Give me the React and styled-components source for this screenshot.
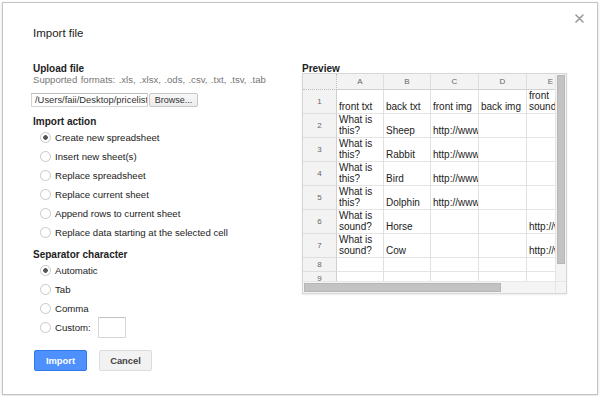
import React from "react";
import styled, { createGlobalStyle } from "styled-components";

const GlobalStyle = createGlobalStyle`
  html, body {
    margin: 0;
    padding: 0;
    background: #fff;
  }
  body {
    font-family: "Liberation Sans", Arial, sans-serif;
    color: #222;
  }
`;

const importActions = [
  "Create new spreadsheet",
  "Insert new sheet(s)",
  "Replace spreadsheet",
  "Replace current sheet",
  "Append rows to current sheet",
  "Replace data starting at the selected cell",
];

const separators = ["Automatic", "Tab", "Comma"];

const columns = ["A", "B", "C", "D", "E"];
const colWidths = [34, 47, 47, 48, 48, 48];

const rows = [
  { h: 24, cells: ["front txt", "back txt", "front img", "back img", "front sound"] },
  { h: 24, cells: ["What is this?", "Sheep", "http://www.example.com/sheep.jpg", "", ""] },
  { h: 24, cells: ["What is this?", "Rabbit", "http://www.example.com/rabbit.jpg", "", ""] },
  { h: 24, cells: ["What is this?", "Bird", "http://www.example.com/bird.jpg", "", ""] },
  { h: 24, cells: ["What is this?", "Dolphin", "http://www.example.com/dolphin.jpg", "", ""] },
  { h: 24, cells: ["What is sound?", "Horse", "", "", "http://www.example.com/horse.mp3"] },
  { h: 24, cells: ["What is sound?", "Cow", "", "", "http://www.example.com/cow.mp3"] },
  { h: 14, cells: ["", "", "", "", ""] },
  { h: 14, cells: ["", "", "", "", ""] },
];

function Radio({ label, checked, children }) {
  return (
    <RadioRow>
      <RadioDot $checked={checked} />
      <span>{label}</span>
      {children}
    </RadioRow>
  );
}

export default function App() {
  return (
    <>
      <GlobalStyle />
      <Dialog>
        <Title>Import file</Title>
        <Close aria-label="close">
          <svg width="9" height="9" viewBox="0 0 9 9">
            <path d="M1 1 L8 8 M8 1 L1 8" stroke="#9a9a9a" strokeWidth="1.6" strokeLinecap="round" />
          </svg>
        </Close>
        <Body>
          <LeftPane>
            <Heading>Upload file</Heading>
            <Hint>Supported formats: .xls, .xlsx, .ods, .csv, .txt, .tsv, .tab</Hint>
            <FileRow>
              <FileInput>/Users/faii/Desktop/pricelist.csv</FileInput>
              <BrowseButton>Browse...</BrowseButton>
            </FileRow>

            <Heading $top={9}>Import action</Heading>
            <RadioList>
              {importActions.map((a, i) => (
                <Radio key={a} label={a} checked={i === 0} />
              ))}
            </RadioList>

            <Heading $top={7}>Separator character</Heading>
            <RadioList>
              {separators.map((s, i) => (
                <Radio key={s} label={s} checked={i === 0} />
              ))}
              <Radio label="Custom:">
                <CustomInput />
              </Radio>
            </RadioList>

            <Buttons>
              <Button $primary>Import</Button>
              <Button>Cancel</Button>
            </Buttons>
          </LeftPane>

          <RightPane>
            <PreviewHeading>Preview</PreviewHeading>
            <GridFrame>
              <Viewport>
                <Sheet>
                  <colgroup>
                    {colWidths.map((w, i) => (
                      <col key={i} style={{ width: w }} />
                    ))}
                  </colgroup>
                  <thead>
                    <HeadRow>
                      <Corner />
                      {columns.map((c) => (
                        <ColHead key={c}>{c}</ColHead>
                      ))}
                    </HeadRow>
                  </thead>
                  <tbody>
                    {rows.map((r, i) => (
                      <tr key={i} style={{ height: r.h }}>
                        <RowHead>{i + 1}</RowHead>
                        {r.cells.map((c, j) => (
                          <Cell key={j}>
                            {c.startsWith("http") ? <Url>{c}</Url> : c}
                          </Cell>
                        ))}
                      </tr>
                    ))}
                  </tbody>
                </Sheet>
              </Viewport>
              <VScroll>
                <VThumb />
              </VScroll>
              <HScroll>
                <HThumb />
              </HScroll>
              <ScrollCorner />
            </GridFrame>
          </RightPane>
        </Body>
      </Dialog>
    </>
  );
}

/* Styles */

const Dialog = styled.div`
  position: relative;
  box-sizing: border-box;
  width: 596px;
  height: 393px;
  margin: 2px;
  padding: 23px 0 0 30px;
  border: 1px solid #c4c4c4;
  box-shadow: 0 1px 3px rgba(0, 0, 0, 0.15);
  background: #fff;
`;

const Title = styled.div`
  font-size: 11.5px;
  line-height: 14px;
  color: #222;
`;

const Close = styled.div`
  position: absolute;
  top: 11px;
  right: 13px;
  width: 9px;
  height: 9px;
  display: flex;
  cursor: pointer;
`;

const Body = styled.div`
  display: flex;
  margin-top: 23px;
`;

const LeftPane = styled.div`
  width: 269px;
  display: flex;
  flex-direction: column;
`;

const RightPane = styled.div`
  display: flex;
  flex-direction: column;
`;

const Heading = styled.div`
  font-size: 10px;
  font-weight: bold;
  line-height: 12px;
  color: #222;
  margin-top: ${(p) => p.$top || 0}px;
`;

const PreviewHeading = styled(Heading)`
  line-height: 10px;
  margin-top: 1px;
  margin-bottom: -1px;
`;

const Hint = styled.div`
  font-size: 9.6px;
  line-height: 10px;
  word-spacing: 0.7px;
  color: #777;
`;

const FileRow = styled.div`
  display: flex;
  align-items: stretch;
  height: 14px;
  margin-top: 8px;
  margin-left: -2px;
`;

const FileInput = styled.div`
  box-sizing: border-box;
  width: 117px;
  padding: 0 3px;
  border: 1px solid #d3d3d3;
  border-top-color: #bdbdbd;
  font-size: 9.4px;
  line-height: 12px;
  color: #333;
  white-space: nowrap;
  overflow: hidden;
`;

const BrowseButton = styled.div`
  box-sizing: border-box;
  width: 49px;
  margin-left: 1px;
  border: 1px solid #c6c6c6;
  border-radius: 2px;
  background: linear-gradient(#f8f8f8, #ececec);
  font-size: 9px;
  line-height: 12px;
  text-align: center;
  color: #333;
`;

const RadioList = styled.div`
  display: flex;
  flex-direction: column;
`;

const RadioRow = styled.div`
  display: flex;
  align-items: center;
  height: 19px;
  padding-left: 7px;
  font-size: 9.6px;
  color: #222;
`;

const RadioDot = styled.span`
  box-sizing: border-box;
  width: 11px;
  height: 11px;
  margin-right: 4px;
  border-radius: 50%;
  border: 1px solid #c8c8c8;
  background: ${(p) =>
    p.$checked
      ? "radial-gradient(circle, #555 0 2px, #fff 2.6px)"
      : "#fff"};
`;

const CustomInput = styled.span`
  box-sizing: border-box;
  width: 28px;
  height: 21px;
  margin-left: 7px;
  border: 1px solid #d6d6d6;
  border-top-color: #c2c2c2;
  background: #fff;
`;

const Buttons = styled.div`
  display: flex;
  gap: 12px;
  margin-top: 13px;
  padding-left: 1px;
`;

const Button = styled.div`
  box-sizing: border-box;
  width: 53px;
  height: 21px;
  border-radius: 2px;
  font-size: 9.4px;
  font-weight: bold;
  line-height: 19px;
  text-align: center;
  border: 1px solid ${(p) => (p.$primary ? "#3079ed" : "#dcdcdc")};
  background: ${(p) => (p.$primary ? "#4d90fe" : "#f2f2f2")};
  color: ${(p) => (p.$primary ? "#fff" : "#444")};
`;

const GridFrame = styled.div`
  box-sizing: border-box;
  width: 265px;
  height: 221px;
  display: grid;
  grid-template-columns: 1fr 11px;
  grid-template-rows: 1fr 12px;
  border: 1px solid #d6d6d6;
  box-shadow: 0 1px 2px rgba(0, 0, 0, 0.08);
  background: #fff;
`;

const Viewport = styled.div`
  overflow: hidden;
`;

const Sheet = styled.table`
  table-layout: fixed;
  border-collapse: separate;
  border-spacing: 0;
  width: 272px;
  font-size: 10px;
  color: #222;
`;

const HeadRow = styled.tr`
  height: 16px;
`;

const Corner = styled.th`
  background: #f1f1f1;
  border-right: 1px dotted #bdbdbd;
  border-bottom: 1px dotted #bdbdbd;
  padding: 0;
`;

const ColHead = styled.th`
  background: #f3f3f3;
  border-right: 1px solid #dedede;
  border-bottom: 1px solid #d0d0d0;
  font-size: 8px;
  line-height: 9px;
  font-weight: normal;
  color: #666;
  text-align: center;
  padding: 0;
`;

const RowHead = styled.td`
  background: #f3f3f3;
  border-right: 1px solid #d0d0d0;
  border-bottom: 1px solid #dedede;
  font-size: 8px;
  line-height: 9px;
  color: #666;
  text-align: center;
  vertical-align: middle;
  padding: 0;
`;

const Cell = styled.td`
  border-right: 1px solid #e0e0e0;
  border-bottom: 1px solid #e4e4e4;
  padding: 0 2px 1px 2px;
  line-height: 11px;
  vertical-align: bottom;
  overflow: hidden;
`;

const Url = styled.span`
  white-space: nowrap;
`;

const VScroll = styled.div`
  background: #f4f4f4;
  border-left: 1px solid #e6e6e6;
  padding: 1px 1px 0 1px;
`;

const VThumb = styled.div`
  height: 189px;
  background: #c3c3c3;
  border: 1px solid #b6b6b6;
  box-sizing: border-box;
`;

const HScroll = styled.div`
  background: #f4f4f4;
  border-top: 1px solid #e6e6e6;
  padding: 1px 0 1px 1px;
`;

const HThumb = styled.div`
  width: 197px;
  height: 100%;
  background: #c3c3c3;
  border: 1px solid #b6b6b6;
  box-sizing: border-box;
`;

const ScrollCorner = styled.div`
  background: #f4f4f4;
  border-top: 1px solid #e6e6e6;
  border-left: 1px solid #e6e6e6;
`;
